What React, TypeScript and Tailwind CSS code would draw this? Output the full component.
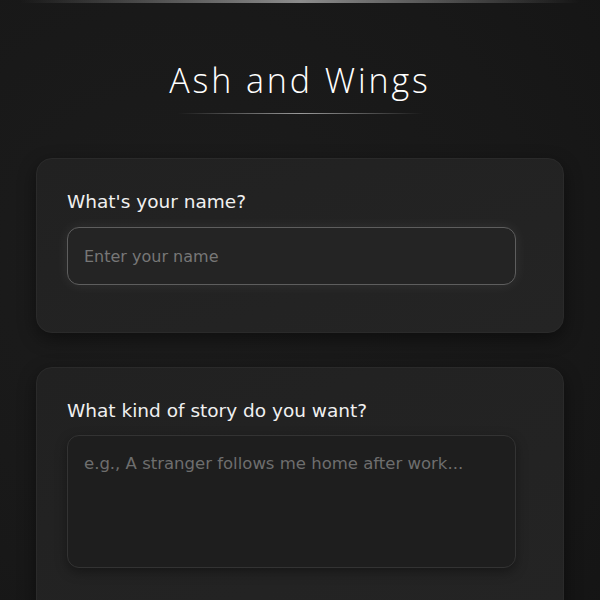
import React from 'react'

const fontStack = { fontFamily: '"DejaVu Sans", "Open Sans", sans-serif' }

export default function App() {
  return (
    <div
      className="min-h-screen bg-[radial-gradient(ellipse_at_30%_40%,#1c1c1c_0%,#181818_60%,#141414_100%)] text-[#ededed]"
      style={fontStack}
    >
      {/* top glow edge */}
      <div className="mx-5 h-[3px] bg-gradient-to-r from-transparent via-[#8c8c8c] to-transparent" />

      <div className="px-9 pt-[55px] pb-10">
        <h1
          className="text-center text-[34px] leading-[44px] tracking-[0.085em] text-white"
          style={{ fontFamily: '"Open Sans", "DejaVu Sans", sans-serif', fontWeight: 300 }}
        >
          Ash and Wings
        </h1>
        <div className="mx-auto mt-[11px] h-px w-[245px] bg-gradient-to-r from-transparent via-[#9a9a9a] to-transparent" />

        <section className="mt-[44px] rounded-2xl border border-[#2a2a2a] bg-gradient-to-br from-[#212121] to-[#242424] px-[30px] pt-[31px] pb-[47px] shadow-[0_6px_18px_rgba(0,0,0,0.45)]">
          <label className="block text-[18.5px] leading-6 text-[#f0f0f0]">What's your name?</label>
          <input
            type="text"
            placeholder="Enter your name"
            className="mt-[13px] block h-[58px] w-[449px] rounded-xl border border-[#5e5e5e] bg-[#242424] px-[16px] text-[16px] text-white placeholder:text-[#777] shadow-[0_0_14px_rgba(255,255,255,0.07)] outline-none"
            style={fontStack}
          />
        </section>

        <section className="mt-[34px] rounded-2xl border border-[#2a2a2a] bg-gradient-to-br from-[#212121] to-[#242424] px-[30px] pt-[31px] pb-[48px] shadow-[0_6px_18px_rgba(0,0,0,0.45)]">
          <label className="block text-[18.5px] leading-6 text-[#f0f0f0]">What kind of story do you want?</label>
          <textarea
            placeholder="e.g., A stranger follows me home after work..."
            className="mt-[12px] block h-[133px] w-[449px] resize-none rounded-xl border border-[#333] bg-[#1e1e1e] px-[16px] py-[16px] text-[16.5px] leading-6 text-white placeholder:text-[#6e6e6e] shadow-[0_4px_12px_rgba(0,0,0,0.35)] outline-none"
            style={fontStack}
          />
        </section>
      </div>
    </div>
  )
}
